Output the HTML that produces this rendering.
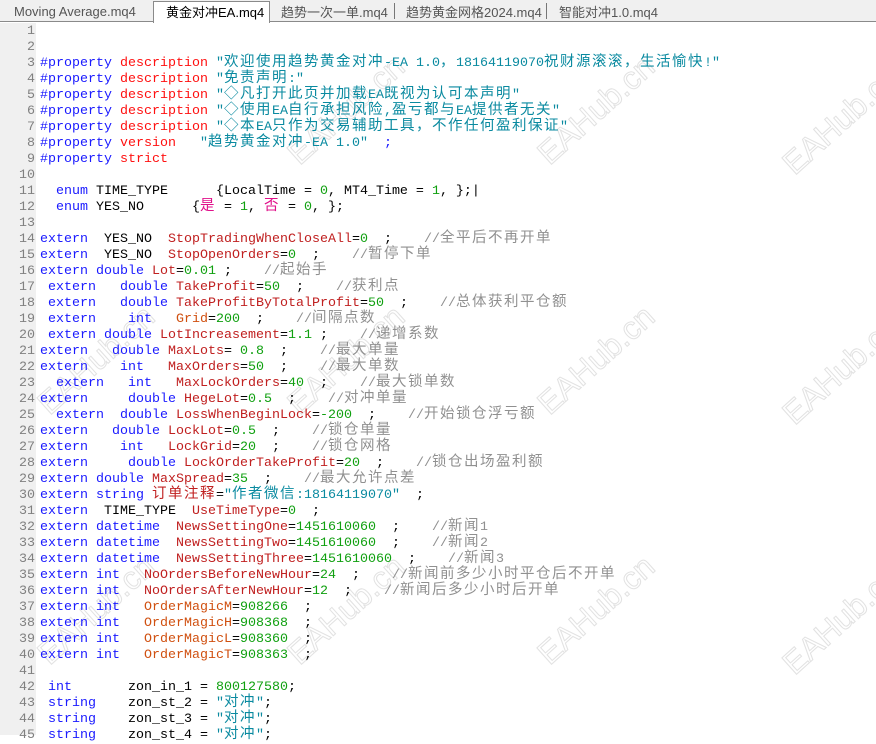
<!DOCTYPE html>
<html><head><meta charset="utf-8"><style>
*{margin:0;padding:0;box-sizing:border-box}
body{width:876px;height:735px;background:#fff;overflow:hidden;position:relative;font-family:"Liberation Mono",monospace;}
#tabs{position:absolute;left:0;top:0;width:876px;height:22px;background:#f0f0f0;border-bottom:1px solid #8a8a8a;font-family:"Liberation Sans","Noto Sans CJK SC",sans-serif;font-size:13px;color:#555}
.tab{position:absolute;top:3px;height:19px;line-height:17px;white-space:nowrap}
.tab.act{top:1px;height:22px;background:#fff;border:1px solid #8a8a8a;border-bottom:none;color:#000;padding-left:12px;line-height:20px}
.sep{position:absolute;top:3px;width:1px;height:16px;background:#777}
#gut{position:absolute;left:0;top:23px;width:36px;height:712px;background:#f0f0f0}
.l{position:absolute;left:0;width:876px;height:16px;font-size:13.33px;white-space:pre;color:#000}
.n{position:absolute;left:0;top:0;width:35px;height:16px;line-height:16px;text-align:right;color:#808080}
.t{position:absolute;left:40px;top:0;height:16px;line-height:16px}
.c{font-family:"Noto Sans CJK SC",sans-serif;font-size:14.5px;letter-spacing:1.5px;line-height:0;vertical-align:baseline}
.k{color:#1a1aff}.p{color:#ff1010}.s{color:#0a8aa0}.v{color:#c02020}.o{color:#d05010}.g{color:#10a010}.m{color:#909090}.q{color:#e0108a}
.w{position:absolute;font-family:"Liberation Sans",sans-serif;font-size:32px;color:transparent;-webkit-text-stroke:1px #e2e2e2;transform:rotate(-42deg);transform-origin:left bottom;white-space:nowrap}
</style></head><body>
<div id="tabs">
<div class="tab" style="left:14px">Moving Average.mq4</div>
<div class="tab act" style="left:153px;width:117px"><span style="font-family:'Noto Sans CJK SC';">黄金对冲</span>EA.mq4</div>
<div class="tab" style="left:281px"><span style="font-family:'Noto Sans CJK SC';">趋势一次一单</span>.mq4</div>
<div class="sep" style="left:394px"></div>
<div class="tab" style="left:406px"><span style="font-family:'Noto Sans CJK SC';">趋势黄金网格</span>2024.mq4</div>
<div class="sep" style="left:546px"></div>
<div class="tab" style="left:559px"><span style="font-family:'Noto Sans CJK SC';">智能对冲</span>1.0.mq4</div>
</div>
<div id="gut"></div>

<div class="w" style="left:555px;top:135px">EAHub.cn</div>
<div class="w" style="left:800px;top:145px">EAHub.cn</div>
<div class="w" style="left:305px;top:135px">EAHub.cn</div>
<div class="w" style="left:555px;top:385px">EAHub.cn</div>
<div class="w" style="left:800px;top:395px">EAHub.cn</div>
<div class="w" style="left:305px;top:385px">EAHub.cn</div>
<div class="w" style="left:555px;top:635px">EAHub.cn</div>
<div class="w" style="left:800px;top:645px">EAHub.cn</div>
<div class="w" style="left:305px;top:635px">EAHub.cn</div>
<div class="w" style="left:55px;top:635px">EAHub.cn</div>
<div class="w" style="left:55px;top:385px">EAHub.cn</div>

<div class="l" style="top:24px"><span class="n">1</span></div>
<div class="l" style="top:40px"><span class="n">2</span></div>
<div class="l" style="top:56px"><span class="n">3</span><span class="t"><span class="k">#property</span> <span class="p">description</span> <span class="s">"<span class="c">欢迎使用趋势黄金对冲</span>-EA 1.0<span class="c">，</span>18164119070<span class="c">祝财源滚滚，生活愉快</span>!"</span></span></div>
<div class="l" style="top:72px"><span class="n">4</span><span class="t"><span class="k">#property</span> <span class="p">description</span> <span class="s">"<span class="c">免责声明</span>:"</span></span></div>
<div class="l" style="top:88px"><span class="n">5</span><span class="t"><span class="k">#property</span> <span class="p">description</span> <span class="s">"<span class="c">◇凡打开此页并加载</span>EA<span class="c">既视为认可本声明</span>"</span></span></div>
<div class="l" style="top:104px"><span class="n">6</span><span class="t"><span class="k">#property</span> <span class="p">description</span> <span class="s">"<span class="c">◇使用</span>EA<span class="c">自行承担风险</span>,<span class="c">盈亏都与</span>EA<span class="c">提供者无关</span>"</span></span></div>
<div class="l" style="top:120px"><span class="n">7</span><span class="t"><span class="k">#property</span> <span class="p">description</span> <span class="s">"<span class="c">◇本</span>EA<span class="c">只作为交易辅助工具，不作任何盈利保证</span>"</span></span></div>
<div class="l" style="top:136px"><span class="n">8</span><span class="t"><span class="k">#property</span> <span class="p">version</span>   <span class="s">"<span class="c">趋势黄金对冲</span>-EA 1.0"</span>  <span class="k">;</span></span></div>
<div class="l" style="top:152px"><span class="n">9</span><span class="t"><span class="k">#property</span> <span class="p">strict</span></span></div>
<div class="l" style="top:168px"><span class="n">10</span></div>
<div class="l" style="top:184px"><span class="n">11</span><span class="t">  <span class="k">enum</span> TIME_TYPE      {LocalTime = <span class="g">0</span>, MT4_Time = <span class="g">1</span>, };|</span></div>
<div class="l" style="top:200px"><span class="n">12</span><span class="t">  <span class="k">enum</span> YES_NO      {<span class="q c">是</span> = <span class="g">1</span>, <span class="q c">否</span> = <span class="g">0</span>, };</span></div>
<div class="l" style="top:216px"><span class="n">13</span></div>
<div class="l" style="top:232px"><span class="n">14</span><span class="t"><span class="k">extern</span>  YES_NO  <span class="v">StopTradingWhenCloseAll</span>=<span class="g">0</span>  ;    <span class="m">//<span class="c">全平后不再开单</span></span></span></div>
<div class="l" style="top:248px"><span class="n">15</span><span class="t"><span class="k">extern</span>  YES_NO  <span class="v">StopOpenOrders</span>=<span class="g">0</span>  ;    <span class="m">//<span class="c">暂停下单</span></span></span></div>
<div class="l" style="top:264px"><span class="n">16</span><span class="t"><span class="k">extern double</span> <span class="v">Lot</span>=<span class="g">0.01</span> ;    <span class="m">//<span class="c">起始手</span></span></span></div>
<div class="l" style="top:280px"><span class="n">17</span><span class="t"> <span class="k">extern</span>   <span class="k">double</span> <span class="v">TakeProfit</span>=<span class="g">50</span>  ;    <span class="m">//<span class="c">获利点</span></span></span></div>
<div class="l" style="top:296px"><span class="n">18</span><span class="t"> <span class="k">extern</span>   <span class="k">double</span> <span class="v">TakeProfitByTotalProfit</span>=<span class="g">50</span>  ;    <span class="m">//<span class="c">总体获利平仓额</span></span></span></div>
<div class="l" style="top:312px"><span class="n">19</span><span class="t"> <span class="k">extern</span>    <span class="k">int</span>   <span class="o">Grid</span>=<span class="g">200</span>  ;    <span class="m">//<span class="c">间隔点数</span></span></span></div>
<div class="l" style="top:328px"><span class="n">20</span><span class="t"> <span class="k">extern double</span> <span class="v">LotIncreasement</span>=<span class="g">1.1</span> ;    <span class="m">//<span class="c">递增系数</span></span></span></div>
<div class="l" style="top:344px"><span class="n">21</span><span class="t"><span class="k">extern</span>   <span class="k">double</span> <span class="v">MaxLots</span>= <span class="g">0.8</span>  ;    <span class="m">//<span class="c">最大单量</span></span></span></div>
<div class="l" style="top:360px"><span class="n">22</span><span class="t"><span class="k">extern</span>    <span class="k">int</span>   <span class="v">MaxOrders</span>=<span class="g">50</span>  ;    <span class="m">//<span class="c">最大单数</span></span></span></div>
<div class="l" style="top:376px"><span class="n">23</span><span class="t">  <span class="k">extern</span>   <span class="k">int</span>   <span class="v">MaxLockOrders</span>=<span class="g">40</span>  ;    <span class="m">//<span class="c">最大锁单数</span></span></span></div>
<div class="l" style="top:392px"><span class="n">24</span><span class="t"><span class="k">extern</span>     <span class="k">double</span> <span class="v">HegeLot</span>=<span class="g">0.5</span>  ;    <span class="m">//<span class="c">对冲单量</span></span></span></div>
<div class="l" style="top:408px"><span class="n">25</span><span class="t">  <span class="k">extern</span>  <span class="k">double</span> <span class="v">LossWhenBeginLock</span>=<span class="g">-200</span>  ;    <span class="m">//<span class="c">开始锁仓浮亏额</span></span></span></div>
<div class="l" style="top:424px"><span class="n">26</span><span class="t"><span class="k">extern</span>   <span class="k">double</span> <span class="v">LockLot</span>=<span class="g">0.5</span>  ;    <span class="m">//<span class="c">锁仓单量</span></span></span></div>
<div class="l" style="top:440px"><span class="n">27</span><span class="t"><span class="k">extern</span>    <span class="k">int</span>   <span class="v">LockGrid</span>=<span class="g">20</span>  ;    <span class="m">//<span class="c">锁仓网格</span></span></span></div>
<div class="l" style="top:456px"><span class="n">28</span><span class="t"><span class="k">extern</span>     <span class="k">double</span> <span class="v">LockOrderTakeProfit</span>=<span class="g">20</span>  ;    <span class="m">//<span class="c">锁仓出场盈利额</span></span></span></div>
<div class="l" style="top:472px"><span class="n">29</span><span class="t"><span class="k">extern double</span> <span class="v">MaxSpread</span>=<span class="g">35</span>  ;    <span class="m">//<span class="c">最大允许点差</span></span></span></div>
<div class="l" style="top:488px"><span class="n">30</span><span class="t"><span class="k">extern string</span> <span class="v c">订单注释</span>=<span class="s">"<span class="c">作者微信</span>:18164119070"</span>  ;</span></div>
<div class="l" style="top:504px"><span class="n">31</span><span class="t"><span class="k">extern</span>  TIME_TYPE  <span class="v">UseTimeType</span>=<span class="g">0</span>  ;</span></div>
<div class="l" style="top:520px"><span class="n">32</span><span class="t"><span class="k">extern datetime</span>  <span class="v">NewsSettingOne</span>=<span class="g">1451610060</span>  ;    <span class="m">//<span class="c">新闻</span>1</span></span></div>
<div class="l" style="top:536px"><span class="n">33</span><span class="t"><span class="k">extern datetime</span>  <span class="v">NewsSettingTwo</span>=<span class="g">1451610060</span>  ;    <span class="m">//<span class="c">新闻</span>2</span></span></div>
<div class="l" style="top:552px"><span class="n">34</span><span class="t"><span class="k">extern datetime</span>  <span class="v">NewsSettingThree</span>=<span class="g">1451610060</span>  ;    <span class="m">//<span class="c">新闻</span>3</span></span></div>
<div class="l" style="top:568px"><span class="n">35</span><span class="t"><span class="k">extern int</span>   <span class="v">NoOrdersBeforeNewHour</span>=<span class="g">24</span>  ;    <span class="m">//<span class="c">新闻前多少小时平仓后不开单</span></span></span></div>
<div class="l" style="top:584px"><span class="n">36</span><span class="t"><span class="k">extern int</span>   <span class="v">NoOrdersAfterNewHour</span>=<span class="g">12</span>  ;    <span class="m">//<span class="c">新闻后多少小时后开单</span></span></span></div>
<div class="l" style="top:600px"><span class="n">37</span><span class="t"><span class="k">extern int</span>   <span class="o">OrderMagicM</span>=<span class="g">908266</span>  ;</span></div>
<div class="l" style="top:616px"><span class="n">38</span><span class="t"><span class="k">extern int</span>   <span class="o">OrderMagicH</span>=<span class="g">908368</span>  ;</span></div>
<div class="l" style="top:632px"><span class="n">39</span><span class="t"><span class="k">extern int</span>   <span class="o">OrderMagicL</span>=<span class="g">908360</span>  ;</span></div>
<div class="l" style="top:648px"><span class="n">40</span><span class="t"><span class="k">extern int</span>   <span class="o">OrderMagicT</span>=<span class="g">908363</span>  ;</span></div>
<div class="l" style="top:664px"><span class="n">41</span></div>
<div class="l" style="top:680px"><span class="n">42</span><span class="t"> <span class="k">int</span>       zon_in_1 = <span class="g">800127580</span>;</span></div>
<div class="l" style="top:696px"><span class="n">43</span><span class="t"> <span class="k">string</span>    zon_st_2 = <span class="s">"<span class="c">对冲</span>"</span>;</span></div>
<div class="l" style="top:712px"><span class="n">44</span><span class="t"> <span class="k">string</span>    zon_st_3 = <span class="s">"<span class="c">对冲</span>"</span>;</span></div>
<div class="l" style="top:728px"><span class="n">45</span><span class="t"> <span class="k">string</span>    zon_st_4 = <span class="s">"<span class="c">对冲</span>"</span>;</span></div>
</body></html>
